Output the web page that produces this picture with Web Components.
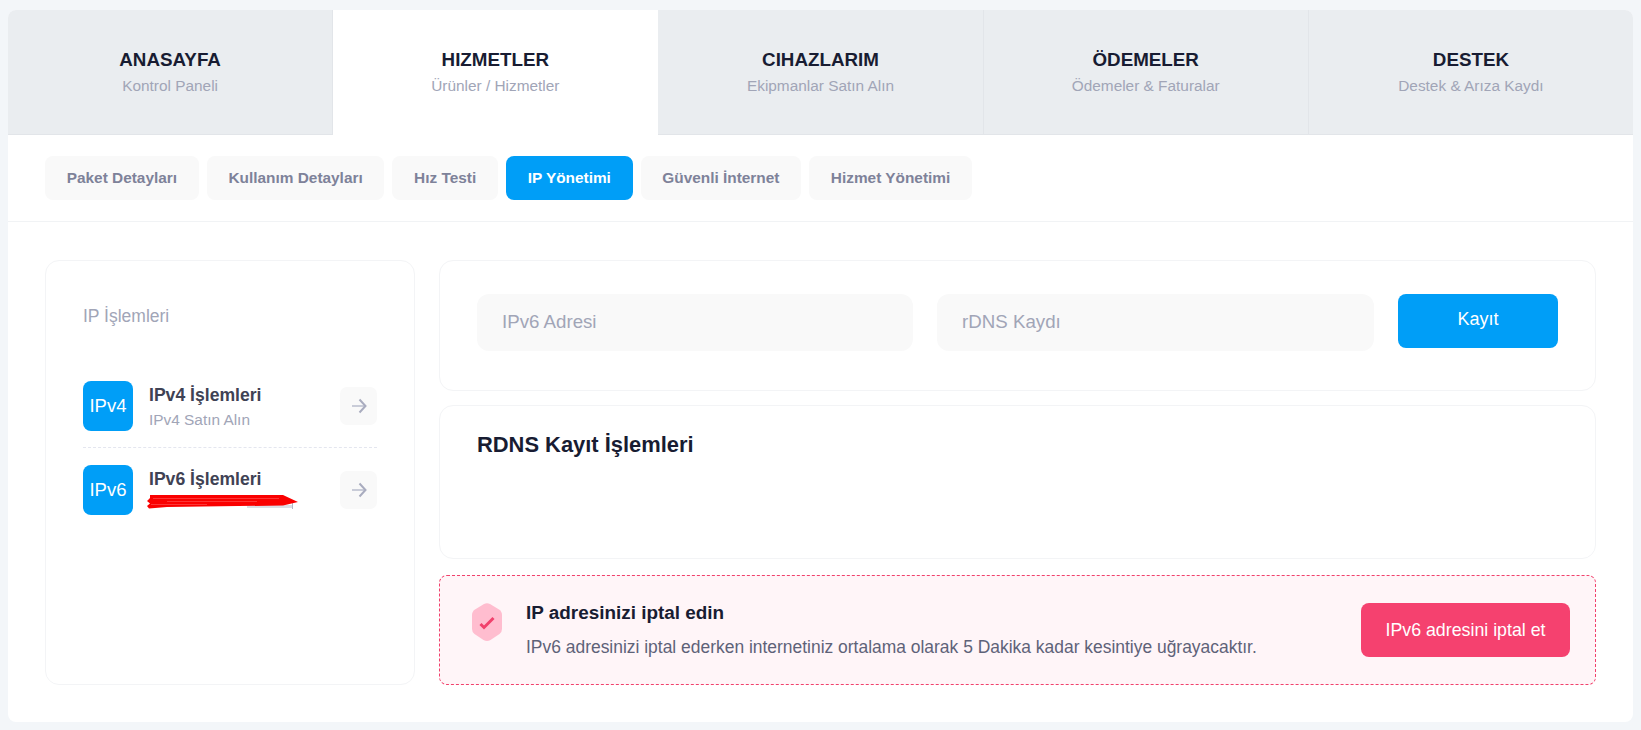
<!DOCTYPE html>
<html lang="tr">
<head>
<meta charset="utf-8">
<title>IP Yönetimi</title>
<style>
  html, body { margin: 0; height: 730px; overflow: hidden; background: #f3f6f9; }
  body { padding: 10px 8px 8px; box-sizing: border-box; font-family: "Liberation Sans", Arial, sans-serif; color: #181c32; }
</style>
</head>
<body>
<account-page>
  <nav-tab slot="tabs" sub="Kontrol Paneli">ANASAYFA</nav-tab>
  <nav-tab slot="tabs" sub="Ürünler / Hizmetler" active>HIZMETLER</nav-tab>
  <nav-tab slot="tabs" sub="Ekipmanlar Satın Alın">CIHAZLARIM</nav-tab>
  <nav-tab slot="tabs" sub="Ödemeler &amp; Faturalar">ÖDEMELER</nav-tab>
  <nav-tab slot="tabs" sub="Destek &amp; Arıza Kaydı" last>DESTEK</nav-tab>

  <sub-pill slot="pills">Paket Detayları</sub-pill>
  <sub-pill slot="pills">Kullanım Detayları</sub-pill>
  <sub-pill slot="pills">Hız Testi</sub-pill>
  <sub-pill slot="pills" active>IP Yönetimi</sub-pill>
  <sub-pill slot="pills">Güvenli İnternet</sub-pill>
  <sub-pill slot="pills">Hizmet Yönetimi</sub-pill>

  <ip-menu slot="side">
    <ip-item badge="IPv4" sub="IPv4 Satın Alın">IPv4 İşlemleri</ip-item>
    <ip-item badge="IPv6" scribbled last>IPv6 İşlemleri</ip-item>
  </ip-menu>

  <rdns-form slot="main"></rdns-form>
  <rdns-list slot="main"></rdns-list>
  <revoke-notice slot="main"></revoke-notice>
</account-page>

<script>
// page frame: tab row, pill row, two column body
class AccountPage extends HTMLElement {
  constructor() {
    super();
    this.attachShadow({ mode: 'open' }).innerHTML = `
      <style>
        :host { display: block; height: 712px; background: #fff; border-radius: 8px; overflow: hidden; }
        .tabs { display: flex; height: 125px; }
        .pills { display: flex; gap: 8px; height: 87px; box-sizing: border-box; padding: 21px 37px 0; border-bottom: 1px solid #f1f3f5; }
        .body { display: flex; gap: 24px; box-sizing: border-box; padding: 38px 37px 37px; height: 500px; }
        .side { display: flex; width: 370px; flex: none; }
        .main { display: flex; flex-direction: column; flex: 1; min-width: 0; }
      </style>
      <div class="tabs"><slot name="tabs"></slot></div>
      <div class="pills"><slot name="pills"></slot></div>
      <div class="body">
        <div class="side"><slot name="side"></slot></div>
        <div class="main"><slot name="main"></slot></div>
      </div>`;
  }
}

class NavTab extends HTMLElement {
  constructor() {
    super();
    this.attachShadow({ mode: 'open' });
  }
  connectedCallback() {
    const sub = this.getAttribute('sub') || '';
    this.shadowRoot.innerHTML = `
      <style>
        :host { display: flex; flex: 1 1 0; flex-direction: column; align-items: center; justify-content: center; box-sizing: border-box;
                padding-bottom: 2px; background: #eaedf0; border-bottom: 1px solid #e2e5e9; border-right: 1px solid #e2e5e9; }
        :host([active]) { background: #fff; border-color: #fff; }
        :host([last]) { border-right: 0; }
        b { font-size: 18.8px; line-height: 22px; color: #181c32; }
        span { font-size: 15.4px; line-height: 17px; margin-top: 6px; color: #a1a5b7; }
      </style>
      <b><slot></slot></b><span>${sub}</span>`;
  }
}

class SubPill extends HTMLElement {
  constructor() {
    super();
    this.attachShadow({ mode: 'open' }).innerHTML = `
      <style>
        :host { display: flex; align-items: center; height: 44px; padding: 0 21.7px; border-radius: 8px; background: #f9f9f9;
                font-size: 15.4px; font-weight: 700; color: #7e8299; }
        :host([active]) { background: #009ef7; color: #fff; }
      </style>
      <slot></slot>`;
  }
}

class IpMenu extends HTMLElement {
  constructor() {
    super();
    this.attachShadow({ mode: 'open' }).innerHTML = `
      <style>
        :host { display: block; flex: 1; box-sizing: border-box; padding: 45px 37px 0; border: 1px solid #f3f4f6; border-radius: 14px; }
        h3 { margin: 0 0 55px; font-size: 17.5px; line-height: 20px; font-weight: 400; color: #a1a5b7; }
      </style>
      <h3>IP İşlemleri</h3>
      <slot></slot>`;
  }
}

class IpItem extends HTMLElement {
  constructor() {
    super();
    this.attachShadow({ mode: 'open' });
  }
  connectedCallback() {
    const badge = this.getAttribute('badge');
    const sub = this.getAttribute('sub') || '';
    // the second row has its sub line painted over by hand in the screenshot
    const scribble = this.hasAttribute('scribbled') ? `
      <svg class="scribble" width="152" height="16" viewBox="0 0 152 16" aria-hidden="true">
        <rect x="100" y="11" width="45" height="3" fill="#c4c6d2" opacity=".6"/>
        <rect x="145" y="9" width="1" height="6" fill="#b4b7c6"/>
        <path d="M3 1H136L151 8L136 11.5L20 13L2 14.5L0 12L3 9.5L0 7L3 4Z" fill="#fa0000"/>
        <path d="M6 4.5H132M20 7.5H110M4 10.5H60" stroke="#ff6a6a" stroke-width=".5"/>
      </svg>` : '';
    this.shadowRoot.innerHTML = `
      <style>
        :host { display: flex; align-items: center; height: 50px; padding-bottom: 16px; margin-bottom: 17px; border-bottom: 1px dashed #e4e6ef; }
        :host([last]) { border-bottom: 0; }
        .badge { flex: none; width: 50px; height: 50px; border-radius: 8px; background: #009ef7; color: #fff; font-size: 18.5px;
                 display: flex; align-items: center; justify-content: center; }
        .text { flex: 1; margin-left: 16px; position: relative; height: 50px; }
        b { display: block; margin-top: 4px; font-size: 17.6px; line-height: 20px; color: #3f4254; }
        span { display: block; margin-top: 6px; font-size: 15.4px; line-height: 17px; color: #a1a5b7; }
        .scribble { position: absolute; left: -2px; top: 29px; }
        .go { flex: none; width: 37px; height: 38px; border-radius: 7px; background: #f9f9f9; display: flex; align-items: center; justify-content: center; }
      </style>
      <div class="badge">${badge}</div>
      <div class="text"><b><slot></slot></b><span>${sub}</span>${scribble}</div>
      <div class="go">
        <svg width="16" height="16" viewBox="0 0 16 16" fill="none" aria-hidden="true">
          <path d="M1 8H14" stroke="#c9ccd8" stroke-width="2"/>
          <path d="M8.5 1.5L14.5 8L8.5 14.5" stroke="#a9acbf" stroke-width="2"/>
        </svg>
      </div>`;
  }
}

class RdnsForm extends HTMLElement {
  constructor() {
    super();
    this.attachShadow({ mode: 'open' }).innerHTML = `
      <style>
        :host { display: flex; gap: 24px; height: 131px; box-sizing: border-box; padding: 33px 37px 0 37px; margin-bottom: 14px;
                border: 1px solid #f3f4f6; border-radius: 14px; }
        .field { flex: 436 1 0; height: 57px; box-sizing: border-box; padding: 0 25px 2px; border-radius: 12px; background: #f9f9f9;
                 display: flex; align-items: center; font-size: 18.7px; color: #a1a5b7; }
        .field + .field { flex-grow: 437; }
        button { flex: none; width: 160px; height: 54px; padding: 0 0 4px; border: 0; border-radius: 8px; background: #009ef7; color: #fff;
                 font: 400 18px "Liberation Sans", Arial, sans-serif; }
      </style>
      <div class="field">IPv6 Adresi</div>
      <div class="field">rDNS Kaydı</div>
      <button>Kayıt</button>`;
  }
}

class RdnsList extends HTMLElement {
  constructor() {
    super();
    this.attachShadow({ mode: 'open' }).innerHTML = `
      <style>
        :host { display: block; height: 154px; box-sizing: border-box; padding: 26px 37px 0; margin-bottom: 16px;
                border: 1px solid #f3f4f6; border-radius: 14px; }
        h2 { margin: 0; font-size: 21.9px; line-height: 26px; font-weight: 700; color: #181c32; }
      </style>
      <h2>RDNS Kayıt İşlemleri</h2>`;
  }
}

class RevokeNotice extends HTMLElement {
  constructor() {
    super();
    this.attachShadow({ mode: 'open' }).innerHTML = `
      <style>
        :host { display: flex; align-items: center; height: 110px; box-sizing: border-box; padding: 0 25px 0 32px;
                background: #fff5f8; border: 1px dashed #f1416c; border-radius: 8px; }
        svg { flex: none; align-self: flex-start; margin-top: 27px; }
        .text { flex: 1; margin-left: 24px; padding-bottom: 2px; }
        h4 { margin: 0 0 13px; font-size: 18.9px; line-height: 22px; font-weight: 700; color: #181c32; }
        p { margin: 0; font-size: 17.45px; line-height: 20px; color: #5e6278; }
        button { flex: none; width: 209px; height: 54px; padding: 0; border: 0; border-radius: 8px; background: #f5416f; color: #fff;
                 font: 400 17.8px "Liberation Sans", Arial, sans-serif; }
      </style>
      <svg width="30" height="38" viewBox="0 0 30 38" aria-hidden="true">
        <path d="M12 1Q15 -.5 18 1L27 6.5Q30 8.5 30 12V26Q30 29 27.5 31L18.5 37Q15 39 11.5 37L2.5 31Q0 29 0 26V12Q0 8.5 3 6.5Z" fill="#ffbdcf"/>
        <path d="M8.5 21L12 24.5L21.5 15" fill="none" stroke="#f1416c" stroke-width="3"/>
      </svg>
      <div class="text">
        <h4>IP adresinizi iptal edin</h4>
        <p>IPv6 adresinizi iptal ederken internetiniz ortalama olarak 5 Dakika kadar kesintiye uğrayacaktır.</p>
      </div>
      <button>IPv6 adresini iptal et</button>`;
  }
}

customElements.define('account-page', AccountPage);
customElements.define('nav-tab', NavTab);
customElements.define('sub-pill', SubPill);
customElements.define('ip-menu', IpMenu);
customElements.define('ip-item', IpItem);
customElements.define('rdns-form', RdnsForm);
customElements.define('rdns-list', RdnsList);
customElements.define('revoke-notice', RevokeNotice);
</script>
</body>
</html>
